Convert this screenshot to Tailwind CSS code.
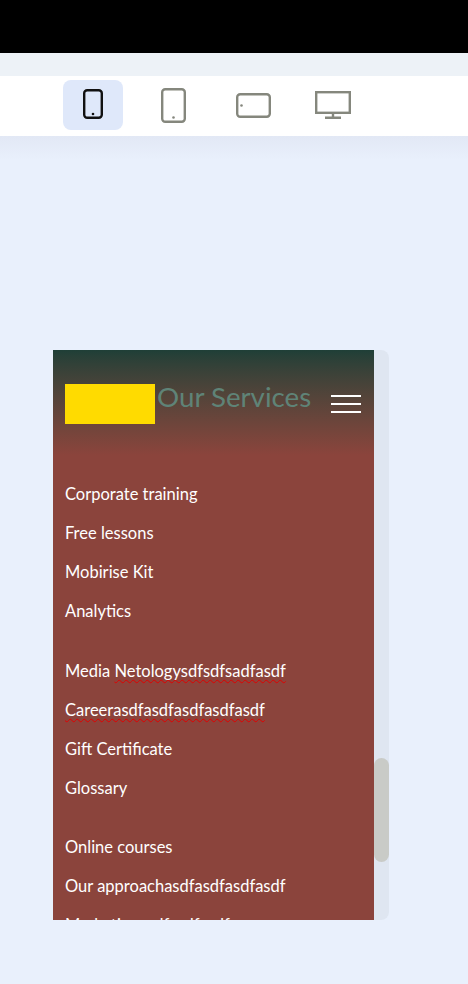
<!DOCTYPE html>
<html lang="en">

<head>
    <meta charset="UTF-8">
    <meta name="viewport" content="width=device-width, initial-scale=1.0">
    <title>Our Services</title>
    <script src="https://cdn.jsdelivr.net/npm/@tailwindcss/browser@4"></script>
</head>

<body class="bg-[#e9f0fc] h-[984px] overflow-hidden font-['Lato',sans-serif]">
    <div class="h-[53px] bg-black"></div>
    <div class="h-[23px] bg-[#edf2f7]"></div>

    <!-- device switcher -->
    <div class="h-[60px] bg-white flex items-start gap-5 pl-[63px] pt-1">
        <button class="w-[60px] h-[50px] rounded-lg bg-[#dfe8fa] flex items-center justify-center">
            <svg class="-mt-[2px]" width="20" height="30" viewBox="0 0 20 30" fill="none" stroke="#111" stroke-width="2.400">
                <rect x="1.200" y="1.200" width="17.600" height="27.600" rx="3" />
                <circle cx="10" cy="25" r="1.300" fill="#111" stroke="none" />
            </svg>
        </button>
        <button class="w-[60px] h-[50px] flex items-center justify-center">
            <svg width="25" height="35" viewBox="0 0 25 35" fill="none" stroke="#85877d" stroke-width="2.400">
                <rect x="1.200" y="1.200" width="22.600" height="32.600" rx="3" />
                <circle cx="12.500" cy="29.500" r="1.300" fill="#85877d" stroke="none" />
            </svg>
        </button>
        <button class="w-[60px] h-[50px] flex items-center justify-center">
            <svg width="35" height="25" viewBox="0 0 35 25" fill="none" stroke="#85877d" stroke-width="2.400">
                <rect x="1.200" y="1.200" width="32.600" height="22.600" rx="3" />
                <circle cx="5.500" cy="12.500" r="1.300" fill="#85877d" stroke="none" />
            </svg>
        </button>
        <button class="w-[60px] h-[50px] flex items-center justify-center">
            <svg width="36" height="28" viewBox="0 0 36 28" fill="none" stroke="#85877d" stroke-width="2.400">
                <rect x="1.200" y="1.200" width="33.600" height="20.600" />
                <path d="M18 22v4.500M10 26.800h16" />
            </svg>
        </button>
    </div>
    <div class="h-[24px] bg-gradient-to-b from-[#e2e8f5] to-[#e9f0fc]"></div>

    <!-- preview -->
    <div class="mt-[190px] ml-[53px] w-[336px] h-[570px] flex">
        <div class="w-[321px] h-full overflow-hidden bg-[#8b443c]">
            <div class="h-[105px] bg-gradient-to-b from-[#1f3f37] to-[#8b443c] flex pl-3 pr-[13px]">
                <div class="w-[90px] h-10 mt-[34px] bg-[#ffdb00]"></div>
                <div class="ml-[2px] mt-[29px] text-[27.700px] leading-[36px] text-[#5f8377] whitespace-nowrap">Our Services</div>
                <div class="ml-auto mt-[45px] w-[30px] h-[18px] flex flex-col justify-between">
                    <span class="h-[2px] bg-white"></span>
                    <span class="h-[2px] bg-white"></span>
                    <span class="h-[2px] bg-white"></span>
                </div>
            </div>
            <div class="pl-3 pt-5 text-white text-[16.500px] leading-[39px]">
                <ul class="mb-[21px]">
                    <li>Corporate training</li>
                    <li>Free lessons</li>
                    <li>Mobirise Kit</li>
                    <li>Analytics</li>
                </ul>
                <ul class="mb-5">
                    <li>Media <span class="underline decoration-wavy decoration-[#e00000] decoration-1 underline-offset-2 [text-decoration-skip-ink:none]">Netologysdfsdfsadfasdf</span></li>
                    <li><span class="underline decoration-wavy decoration-[#e00000] decoration-1 underline-offset-2 [text-decoration-skip-ink:none]">Careerasdfasdfasdfasdfasdf</span></li>
                    <li>Gift Certificate</li>
                    <li>Glossary</li>
                </ul>
                <ul>
                    <li>Online courses</li>
                    <li>Our approachasdfasdfasdfasdf</li>
                    <li>Marketingasdfasdfasdf</li>
                </ul>
            </div>
        </div>
        <div class="relative w-[15px] h-full bg-[#dfe6f1] rounded-r-lg">
            <div class="absolute left-0 top-[408px] w-full h-[104px] bg-[#c9cbc7] rounded-lg"></div>
        </div>
    </div>
</body>

</html>
